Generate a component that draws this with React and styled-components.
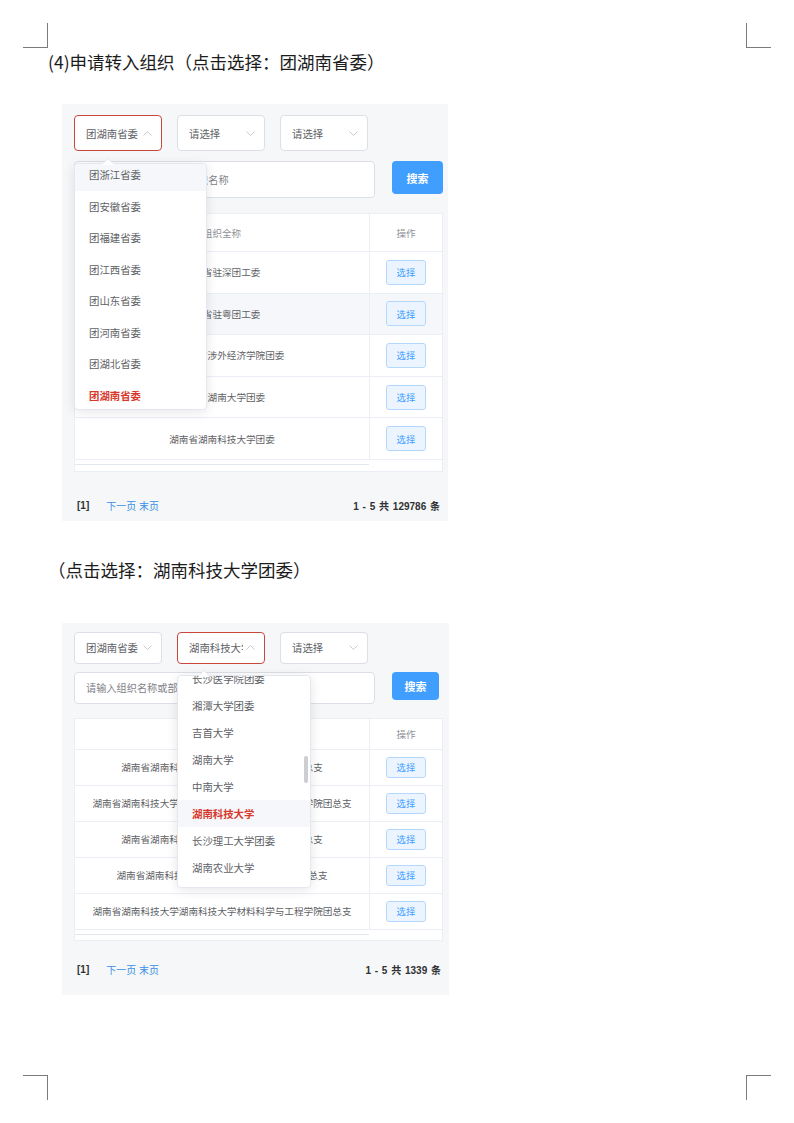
import React from "react";
import styled, { createGlobalStyle } from "styled-components";

const GlobalStyle = createGlobalStyle`
  html, body {
    margin: 0;
    padding: 0;
    background: #fff;
  }
  body {
    font-family: "Noto Sans CJK SC", "Noto Sans", sans-serif;
  }
  * {
    box-sizing: border-box;
  }
`;

const SHOTS = [
  {
    id: "province",
    width: 386,
    mt: 30,
    pt: 11,
    pb: 8,
    selectH: 36,
    inputGap: 10,
    inputH: 37,
    btnW: 51,
    btnH: 33,
    tableGap: 15,
    headH: 38,
    rowH: 41.6,
    stripH: 11,
    pageGap: 27,
    selects: [
      { label: "团湖南省委", open: true },
      { label: "请选择" },
      { label: "请选择" },
    ],
    menu: {
      at: 0,
      gap: 12,
      w: 133,
      h: 247,
      offset: -5,
      itemH: 31.5,
      arrow: 27,
      hover: 0,
      selected: 7,
      items: [
        "团浙江省委",
        "团安徽省委",
        "团福建省委",
        "团江西省委",
        "团山东省委",
        "团河南省委",
        "团湖北省委",
        "团湖南省委",
      ],
    },
    rows: [
      "湖南省驻深团工委",
      "湖南省驻粤团工委",
      "湖南省湖南涉外经济学院团委",
      "湖南省湖南大学团委",
      "湖南省湖南科技大学团委",
    ],
    hoverRow: 1,
    total: 129786,
  },
  {
    id: "school",
    width: 387,
    mt: 41,
    pt: 9,
    pb: 18,
    selectH: 32,
    inputGap: 8,
    inputH: 32,
    btnW: 47,
    btnH: 28,
    tableGap: 14,
    headH: 31,
    rowH: 36,
    stripH: 10,
    pageGap: 22,
    selects: [
      { label: "团湖南省委" },
      { label: "湖南科技大学", open: true },
      { label: "请选择" },
    ],
    menu: {
      at: 1,
      gap: 11,
      w: 134,
      h: 213,
      offset: -10.5,
      itemH: 27,
      arrow: 20,
      hover: 5,
      selected: 5,
      thumb: { top: 80, h: 27 },
      items: [
        "长沙医学院团委",
        "湘潭大学团委",
        "吉首大学",
        "湖南大学",
        "中南大学",
        "湖南科技大学",
        "长沙理工大学团委",
        "湖南农业大学",
      ],
    },
    rows: [
      "湖南省湖南科技大学湖南科技大学商学院团总支",
      "湖南省湖南科技大学湖南科技大学信息与电气工程学院团总支",
      "湖南省湖南科技大学湖南科技大学法学院团总支",
      "湖南省湖南科技大学湖南科技大学数学学院团总支",
      "湖南省湖南科技大学湖南科技大学材料科学与工程学院团总支",
    ],
    hoverRow: -1,
    total: 1339,
  },
];

const Chevron = ({ up }) => (
  <ChevronIcon width="9" height="5" viewBox="0 0 9 5">
    <polyline
      points={up ? "0.5,4.5 4.5,0.5 8.5,4.5" : "0.5,0.5 4.5,4.5 8.5,0.5"}
      fill="none"
      stroke="#c0c4cc"
      strokeWidth="0.9"
    />
  </ChevronIcon>
);

const OrgMenu = ({ menu }) => (
  <Dropdown $gap={menu.gap} $w={menu.w} $h={menu.h}>
    <DropdownArrow $left={menu.arrow} />
    <OptionViewport>
      <OptionList $offset={menu.offset}>
        {menu.items.map((item, i) => (
          <Option
            key={item}
            $h={menu.itemH}
            $hover={i === menu.hover}
            $selected={i === menu.selected}
          >
            {item}
          </Option>
        ))}
      </OptionList>
    </OptionViewport>
    {menu.thumb && <ScrollThumb $top={menu.thumb.top} $h={menu.thumb.h} />}
  </Dropdown>
);

const Screenshot = ({ shot }) => (
  <Shot $w={shot.width} $mt={shot.mt} $pt={shot.pt} $pb={shot.pb}>
    <FilterRow $h={shot.selectH}>
      {shot.selects.map((sel, i) => (
        <SelectWrap key={i}>
          <SelectBox $active={sel.open}>
            <SelectLabel>{sel.label}</SelectLabel>
            <Chevron up={sel.open} />
          </SelectBox>
          {sel.open && shot.menu.at === i && <OrgMenu menu={shot.menu} />}
        </SelectWrap>
      ))}
    </FilterRow>

    <InputRow $mt={shot.inputGap}>
      <SearchInput
        $h={shot.inputH}
        readOnly
        placeholder="请输入组织名称或部分组织名称"
      />
      <SearchButton $w={shot.btnW} $h={shot.btnH}>
        搜索
      </SearchButton>
    </InputRow>

    <Table $mt={shot.tableGap}>
      <Row $h={shot.headH}>
        <HeadCell>组织全称</HeadCell>
        <HeadCell $side>操作</HeadCell>
      </Row>
      {shot.rows.map((name, i) => (
        <Row key={name + i} $h={shot.rowH} $hover={i === shot.hoverRow}>
          <Cell>{name}</Cell>
          <Cell $side>
            <PickButton $small={shot.rowH < 40}>选择</PickButton>
          </Cell>
        </Row>
      ))}
      <ScrollStrip $h={shot.stripH}>
        <ScrollTrack />
      </ScrollStrip>
    </Table>

    <Pager $mt={shot.pageGap}>
      <PagerLeft>
        <CurrentPage>[1]</CurrentPage>
        <PagerLink>下一页 末页</PagerLink>
      </PagerLeft>
      <PagerTotal>1 - 5 共 {shot.total} 条</PagerTotal>
    </Pager>
  </Shot>
);

export default function App() {
  return (
    <>
      <GlobalStyle />
      <Page>
        <CropMark $corner="tl" />
        <CropMark $corner="tr" />
        <CropMark $corner="bl" />
        <CropMark $corner="br" />

        <Heading>(4)申请转入组织（点击选择：团湖南省委）</Heading>
        <Screenshot shot={SHOTS[0]} />

        <Heading $mt={37}>（点击选择：湖南科技大学团委）</Heading>
        <Screenshot shot={SHOTS[1]} />
      </Page>
    </>
  );
}

const Page = styled.div`
  position: relative;
  width: 794px;
  height: 1123px;
  padding: 50px 0 0 48px;
  background: #fff;
  overflow: hidden;
`;

const cornerRules = {
  tl: "left: 23px; top: 23px; border-right-width: 1.5px; border-bottom-width: 1.5px;",
  tr: "left: 746px; top: 23px; border-left-width: 1.5px; border-bottom-width: 1.5px;",
  bl: "left: 23px; top: 1075px; border-right-width: 1.5px; border-top-width: 1.5px;",
  br: "left: 746px; top: 1075px; border-left-width: 1.5px; border-top-width: 1.5px;",
};

const CropMark = styled.span`
  position: absolute;
  width: 25px;
  height: 25px;
  border: 0 solid #7b7b7b;
  ${(props) => cornerRules[props.$corner]}
`;

const Heading = styled.h2`
  margin: ${(props) => props.$mt || 0}px 0 0;
  font-size: 17.5px;
  font-weight: 400;
  line-height: 24px;
  color: #1c1c1c;
  white-space: nowrap;
  text-spacing-trim: space-all;
`;

const Shot = styled.section`
  width: ${(props) => props.$w}px;
  margin: ${(props) => props.$mt}px 0 0 14px;
  padding: ${(props) => props.$pt}px 5px ${(props) => props.$pb}px 12px;
  background: #f6f7f9;
`;

const FilterRow = styled.div`
  display: flex;
  gap: 15px;
  height: ${(props) => props.$h}px;
`;

const SelectWrap = styled.div`
  position: relative;
  width: 88px;
  height: 100%;
`;

const SelectBox = styled.div`
  display: flex;
  align-items: center;
  justify-content: space-between;
  height: 100%;
  padding: 0 9px 0 11px;
  background: #fff;
  border: 1px solid ${(props) => (props.$active ? "#c9473d" : "#dcdfe6")};
  border-radius: 4px;
`;

const SelectLabel = styled.span`
  max-width: 54px;
  overflow: hidden;
  white-space: nowrap;
  font-size: 10.4px;
  color: #606266;
`;

const ChevronIcon = styled.svg`
  flex-shrink: 0;
  display: block;
`;

const Dropdown = styled.div`
  position: absolute;
  z-index: 5;
  left: 0;
  top: calc(100% + ${(props) => props.$gap}px);
  width: ${(props) => props.$w}px;
  height: ${(props) => props.$h}px;
  background: #fff;
  border: 1px solid #e4e7ed;
  border-radius: 4px;
  box-shadow: 0 2px 12px rgba(0, 0, 0, 0.1);
`;

const DropdownArrow = styled.span`
  position: absolute;
  top: -6px;
  left: ${(props) => props.$left}px;
  width: 0;
  height: 0;
  border: 6px solid transparent;
  border-top-width: 0;
  border-bottom-color: #e4e7ed;

  &::after {
    content: "";
    position: absolute;
    top: 1px;
    left: -6px;
    border: 6px solid transparent;
    border-top-width: 0;
    border-bottom-color: #fff;
  }
`;

const OptionViewport = styled.div`
  height: 100%;
  overflow: hidden;
  border-radius: 4px;
`;

const OptionList = styled.ul`
  margin: ${(props) => props.$offset}px 0 0;
  padding: 0;
  list-style: none;
`;

const Option = styled.li`
  display: flex;
  align-items: center;
  height: ${(props) => props.$h}px;
  padding-left: 14px;
  font-size: 10.4px;
  white-space: nowrap;
  color: ${(props) => (props.$selected ? "#d8382c" : "#606266")};
  font-weight: ${(props) => (props.$selected ? 700 : 400)};
  background: ${(props) => (props.$hover ? "#f5f7fa" : "transparent")};
`;

const ScrollThumb = styled.span`
  position: absolute;
  right: 2px;
  top: ${(props) => props.$top}px;
  width: 4px;
  height: ${(props) => props.$h}px;
  border-radius: 2px;
  background: rgba(144, 147, 153, 0.45);
`;

const InputRow = styled.div`
  display: flex;
  align-items: flex-start;
  gap: 17px;
  margin-top: ${(props) => props.$mt}px;
`;

const SearchInput = styled.input`
  width: 301px;
  height: ${(props) => props.$h}px;
  padding: 0 11px;
  background: #fff;
  border: 1px solid #dcdfe6;
  border-radius: 4px;
  font-family: inherit;
  font-size: 10.2px;
  color: #606266;
  outline: none;

  &::placeholder {
    color: #7f8289;
  }
`;

const SearchButton = styled.button`
  width: ${(props) => props.$w}px;
  height: ${(props) => props.$h}px;
  padding: 0;
  border: none;
  border-radius: 4px;
  background: #409eff;
  color: #fff;
  font-family: inherit;
  font-size: 11px;
  font-weight: 700;
`;

const Table = styled.div`
  width: 369px;
  margin-top: ${(props) => props.$mt}px;
  background: #fff;
  border: 1px solid #ebeef5;
`;

const Row = styled.div`
  display: grid;
  grid-template-columns: 1fr 73px;
  height: ${(props) => props.$h}px;
  border-bottom: 1px solid #ebeef5;
  background: ${(props) => (props.$hover ? "#f5f7fa" : "#fff")};
`;

const Cell = styled.div`
  display: flex;
  align-items: center;
  justify-content: center;
  overflow: hidden;
  white-space: nowrap;
  font-size: 9.6px;
  color: #606266;
  border-left: ${(props) => (props.$side ? "1px solid #ebeef5" : "none")};
`;

const HeadCell = styled(Cell)`
  color: #909399;
`;

const PickButton = styled.span`
  display: flex;
  align-items: center;
  justify-content: center;
  width: 40px;
  height: ${(props) => (props.$small ? 21 : 25)}px;
  background: #ecf5ff;
  border: 1px solid #b3d8ff;
  border-radius: 3px;
  font-size: 9.4px;
  color: #409eff;
`;

const ScrollStrip = styled.div`
  height: ${(props) => props.$h}px;
  padding-top: 4px;
`;

const ScrollTrack = styled.div`
  width: 294px;
  border-top: 1px solid #e4e7ed;
`;

const Pager = styled.div`
  display: flex;
  align-items: center;
  justify-content: space-between;
  height: 14px;
  margin-top: ${(props) => props.$mt}px;
  padding: 0 3px 0 3px;
  font-family: "Liberation Sans", "Noto Sans CJK SC", sans-serif;
  font-size: 10px;
`;

const PagerLeft = styled.div`
  display: flex;
  align-items: center;
  gap: 17px;
`;

const CurrentPage = styled.span`
  font-weight: 700;
  color: #303133;
`;

const PagerLink = styled.span`
  color: #3a8ee6;
`;

const PagerTotal = styled.span`
  font-weight: 700;
  color: #303133;
  word-spacing: 1px;
`;
